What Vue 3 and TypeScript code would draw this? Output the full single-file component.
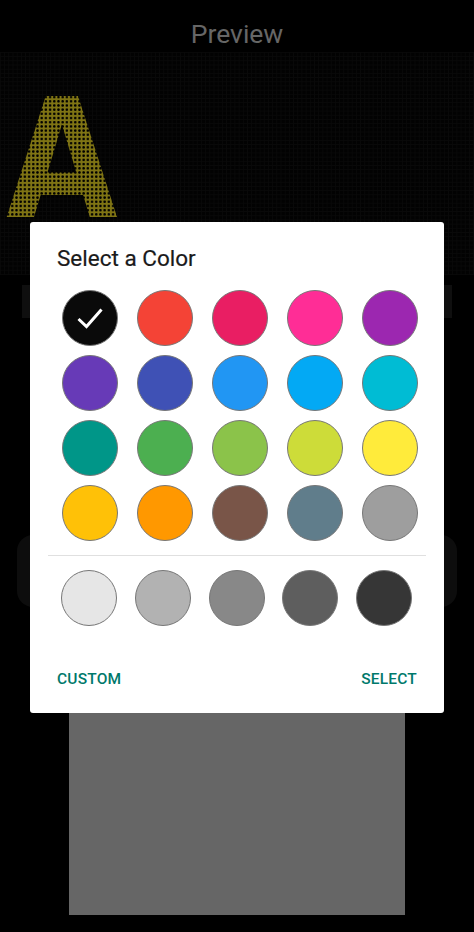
<script setup lang="ts">
const palette: string[] = [
  '#0a0a0a', '#f44336', '#e91e63', '#ff2d96', '#9c27b0',
  '#673ab7', '#3f51b5', '#2196f3', '#03a9f4', '#00bcd4',
  '#009688', '#4caf50', '#8bc34a', '#cddc39', '#ffeb3b',
  '#ffc107', '#ff9800', '#795548', '#607d8b', '#9e9e9e',
]
const shades: string[] = ['#e6e6e6', '#b2b2b2', '#888888', '#5e5e5e', '#363636']
</script>

<template>
  <main class="page">
    <h1 class="heading">Preview</h1>
    <section class="led">
      <span class="led-letter">A</span>
    </section>
    <div class="slider-row"></div>
    <div class="card"></div>
    <div class="square"></div>

    <div class="dialog" role="dialog">
      <h2 class="dialog-title">Select a Color</h2>
      <div class="swatches">
        <span
          v-for="(c, i) in palette"
          :key="c"
          class="swatch"
          :style="{ backgroundColor: c }"
        >
          <svg v-if="i === 0" class="check" viewBox="0 0 28 24" width="28" height="24">
            <path d="M2.5 13 L10.5 20.5 L25.5 3.5" fill="none" stroke="#fff" stroke-width="3" />
          </svg>
        </span>
      </div>
      <hr class="rule" />
      <div class="shades">
        <span
          v-for="s in shades"
          :key="s"
          class="swatch"
          :style="{ backgroundColor: s }"
        ></span>
      </div>
      <div class="actions">
        <button class="action" type="button">CUSTOM</button>
        <button class="action" type="button">SELECT</button>
      </div>
    </div>
  </main>
</template>

<style>
html, body { margin: 0; background: #000; }
</style>

<style scoped>
.page {
  position: relative;
  width: 474px;
  height: 932px;
  overflow: hidden;
  background: #000;
  font-family: Roboto, "Liberation Sans", sans-serif;
  display: flex;
  flex-direction: column;
  align-items: center;
}
.heading {
  margin: 0;
  height: 52px;
  padding-top: 17px;
  box-sizing: border-box;
  font-size: 26.5px;
  line-height: 34px;
  font-weight: 400;
  color: #666;
  flex: none;
}
.led {
  flex: none;
  width: 100%;
  height: 223px;
  box-sizing: border-box;
  padding-top: 43px;
  background-color: #020202;
  background-image:
    linear-gradient(to right, #090909 1px, transparent 1px),
    linear-gradient(to bottom, #090909 1px, transparent 1px);
  background-size: 4.2px 4.2px;
}
.led-letter {
  display: block;
  width: max-content;
  margin-left: 6px;
  font-family: "DejaVu Sans", sans-serif;
  font-weight: 700;
  font-size: 165px;
  line-height: 130px;
  height: 130px;
  transform: scaleX(0.875);
  transform-origin: left;
  color: transparent;
  background-color: #7f7414;
  background-image: radial-gradient(circle, #000 1.1px, transparent 1.5px);
  background-size: 4.8px 4.2px;
  -webkit-background-clip: text;
  background-clip: text;
}
.slider-row {
  flex: none;
  margin-top: 10px;
  width: 430px;
  height: 33px;
  background: #0f0f0f;
}
.card {
  flex: none;
  margin-top: 217px;
  width: 440px;
  height: 72px;
  border-radius: 16px;
  background: #0d0d0d;
}
.square {
  flex: none;
  margin-top: -27px;
  width: 336px;
  height: 335px;
  background: #666;
}
.dialog {
  position: absolute;
  left: 30px;
  top: 222px;
  width: 414px;
  height: 491px;
  box-sizing: border-box;
  background: #fff;
  border-radius: 3px;
  display: flex;
  flex-direction: column;
}
.dialog-title {
  margin: 0;
  padding: 23px 0 0 27px;
  font-size: 22.5px;
  line-height: 26px;
  font-weight: 400;
  color: #1a1a1a;
  -webkit-text-stroke: 0.2px #1a1a1a;
}
.swatches {
  margin: 19px 0 0 32px;
  display: grid;
  grid-template-columns: repeat(5, 56px);
  grid-auto-rows: 56px;
  column-gap: 19px;
  row-gap: 9px;
}
.swatch {
  width: 56px;
  height: 56px;
  box-sizing: border-box;
  border-radius: 50%;
  border: 1.5px solid #777;
  display: flex;
  align-items: center;
  justify-content: center;
}
.check { display: block; }
.rule {
  margin: 14px 18px 0;
  height: 1px;
  border: 0;
  background: #e0e0e0;
}
.shades {
  margin: 14px 0 0 31px;
  display: flex;
  gap: 17.8px;
}
.actions {
  margin-top: 43px;
  padding: 0 27px;
  display: flex;
  justify-content: space-between;
}
.action {
  padding: 0;
  border: 0;
  background: none;
  font-family: Roboto, "Liberation Sans", sans-serif;
  font-size: 15.5px;
  line-height: 21px;
  font-weight: 500;
  letter-spacing: 0.2px;
  color: #00796b;
}
</style>
